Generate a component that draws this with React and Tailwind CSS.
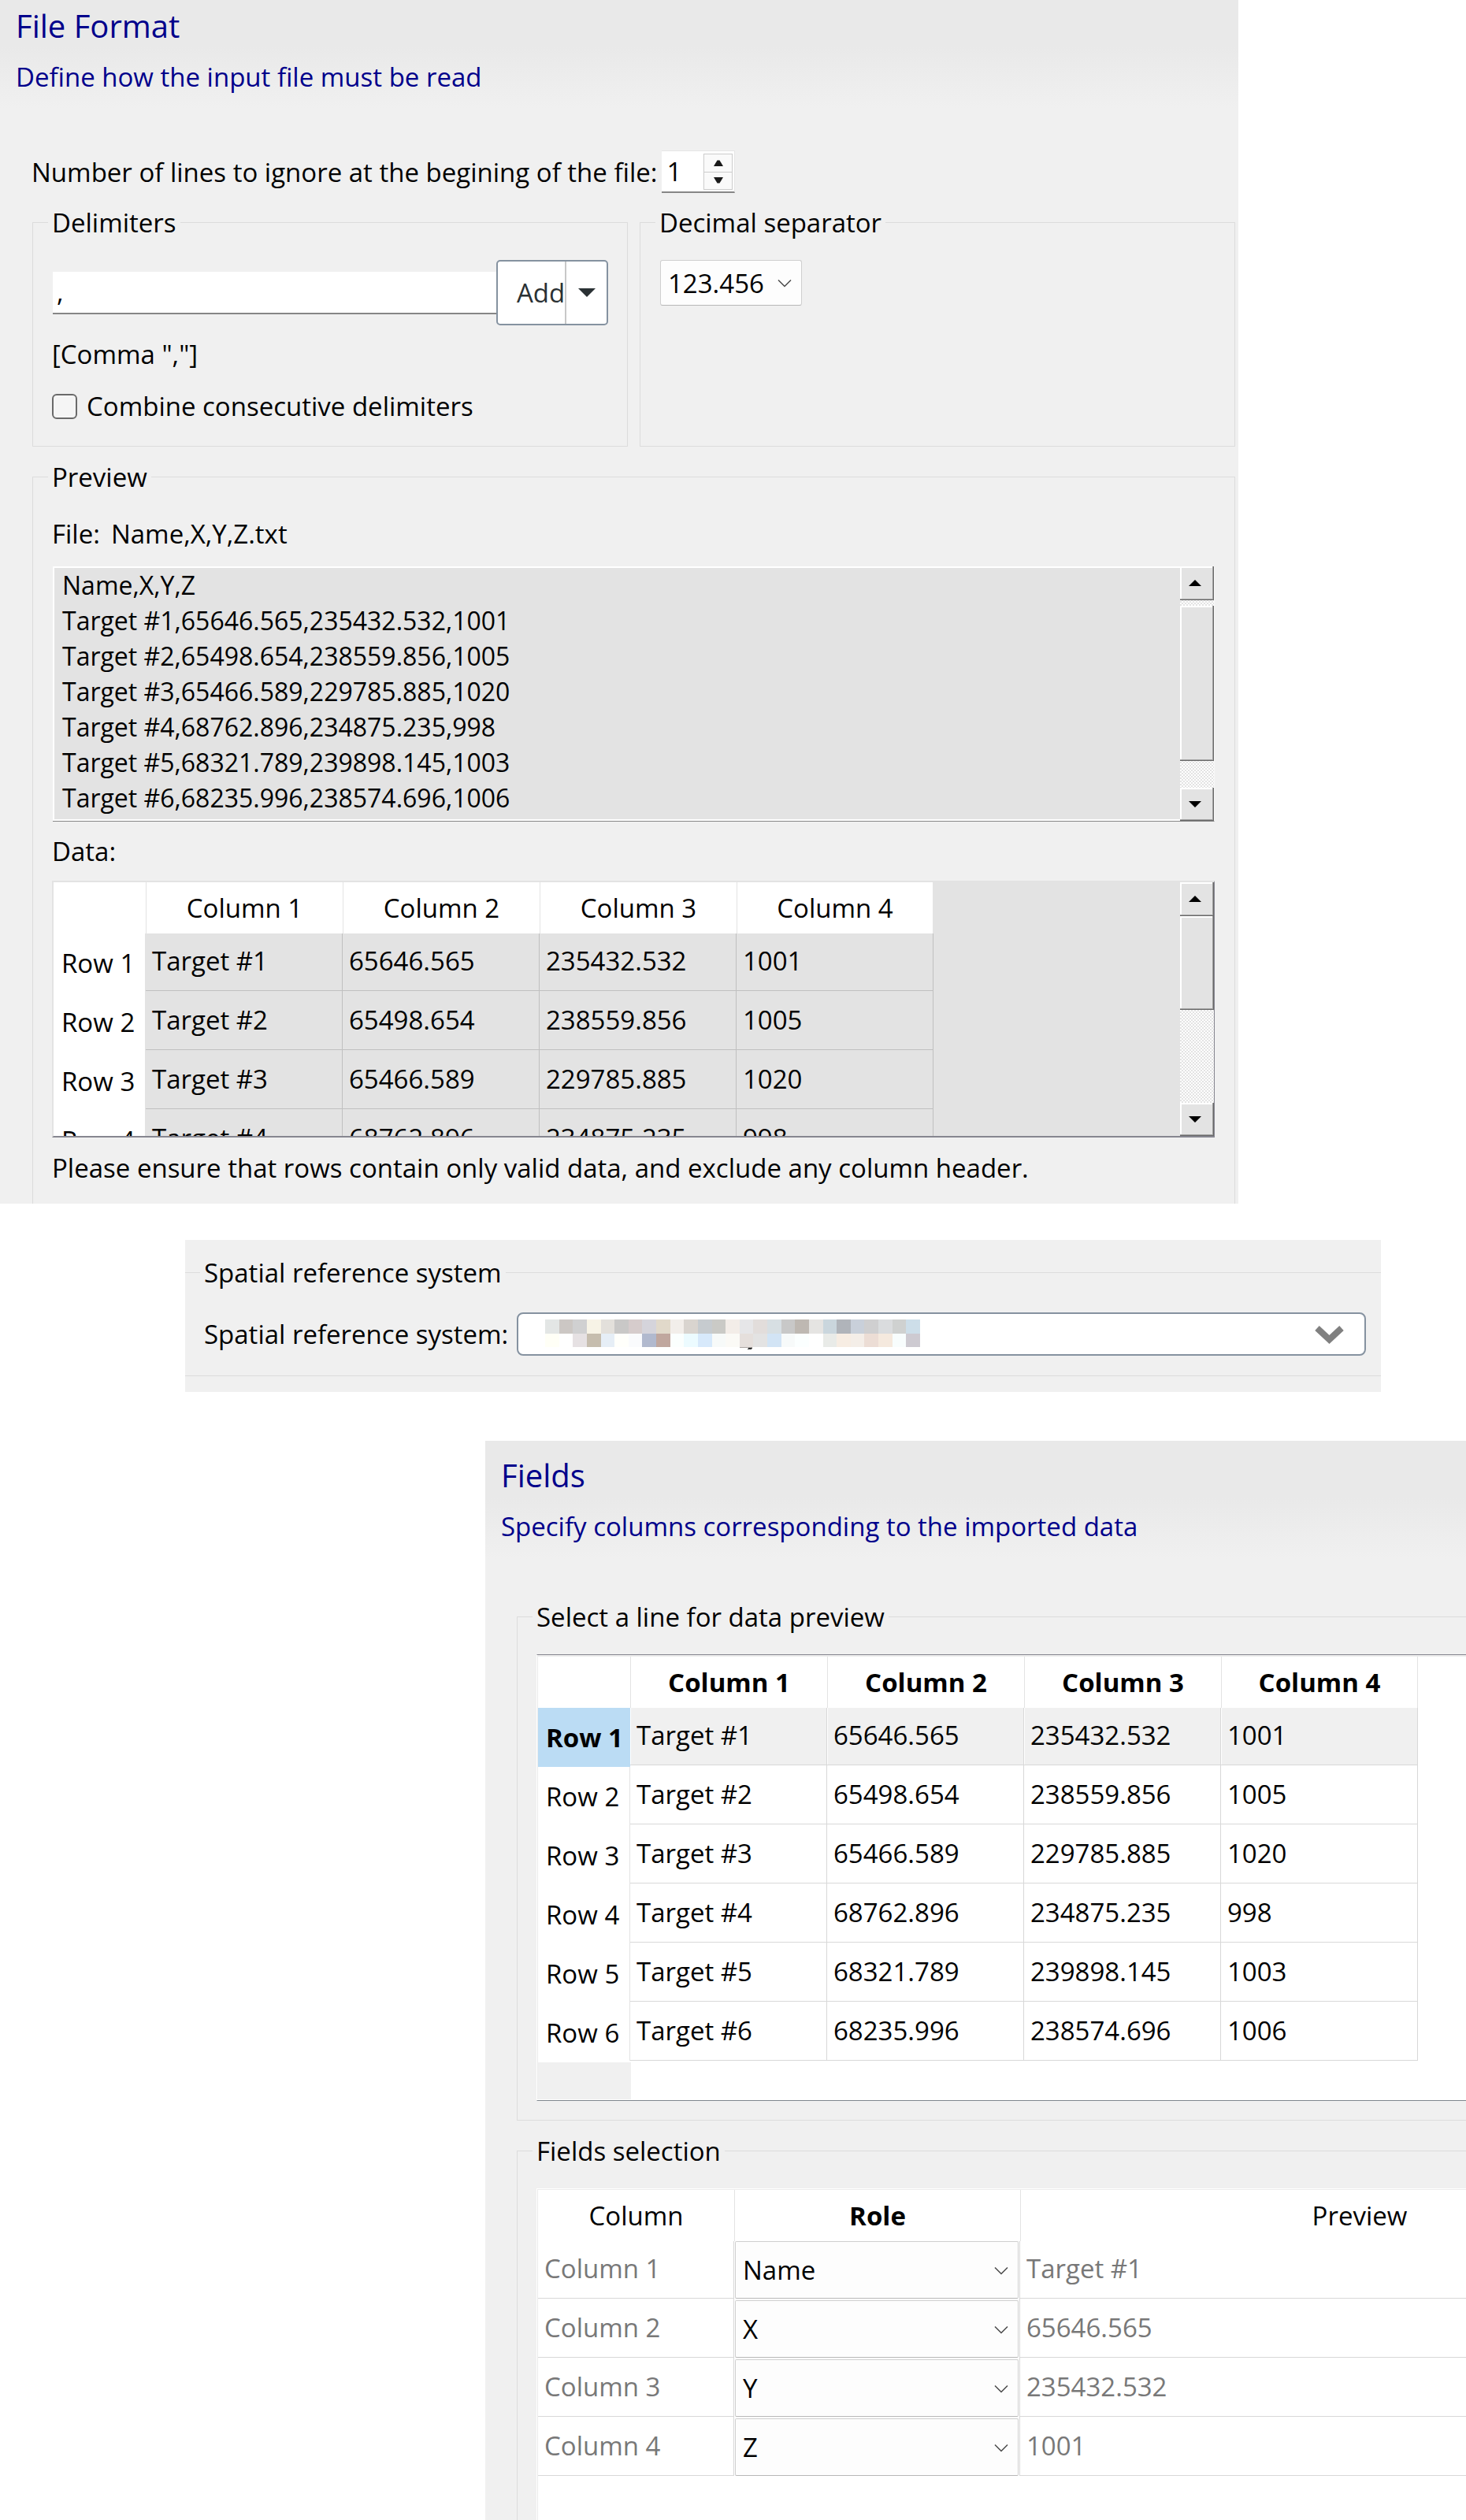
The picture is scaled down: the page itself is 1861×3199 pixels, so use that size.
import { useState } from "react";
import clsx from "clsx";

const TARGETS = [
  ["Target #1", "65646.565", "235432.532", "1001"],
  ["Target #2", "65498.654", "238559.856", "1005"],
  ["Target #3", "65466.589", "229785.885", "1020"],
  ["Target #4", "68762.896", "234875.235", "998"],
  ["Target #5", "68321.789", "239898.145", "1003"],
  ["Target #6", "68235.996", "238574.696", "1006"],
];

const RAW_TEXT = ["Name,X,Y,Z", ...TARGETS.map((t) => t.join(","))].join("\n");

const COLUMNS = ["Column 1", "Column 2", "Column 3", "Column 4"];

const ROLES = ["Name", "X", "Y", "Z"];

const MOSAIC = [
  "#e3e6e5 #ccc7c4 #d0d0d1 #f7f3e6 #e3e0db #c9c8c7 #d6cccc #d5d4db #e1d9ca #f2eeea #d9d4cf #c6cbcf #cacac6 #f3ede8 #e6e6e8 #e2dddb #d7dfe3 #c8c8c8 #beb8b2 #e5e4e2 #cad6dd #b0b4ba #c9d0da #cfcfd0 #dadcde #cfd1d0 #cddee9",
  "#fffff6 #ffffff #e6e1e3 #c6bdae #e6eef6 #fffffb #fafbfd #b1b9ce #c0a79e #fbfffe #ecfbff #d7e9fb #f7faf9 #fbfaf6 #e5dfdc #e3e3e3 #d2e4f5 #f7fafa #fbffff #ffffff #e9ebe8 #f7ede3 #f4eee8 #ecddd5 #f5e9de #f8fdfd #cdcad1",
].map((row) => row.split(" "));

function Header({ title, subtitle, className }) {
  return (
    <header className={clsx("pl-5 text-[#00008b]", className)}>
      <h2 className="text-[40px] leading-[54px]">{title}</h2>
      <p className="mt-[15px]">{subtitle}</p>
    </header>
  );
}

function Group({ title, className, children }) {
  return (
    <fieldset className={clsx("min-w-0 border-[#dcdcdc] pl-[19px]", className)}>
      <legend className="pr-[5px] pl-[5px]">{title}</legend>
      {children}
    </fieldset>
  );
}

function Chevron() {
  return (
    <svg
      className="pointer-events-none absolute top-1/2 right-[13px] -mt-1"
      width="18"
      height="10"
      viewBox="0 0 18 10"
      fill="none"
      stroke="#4a4a4a"
      strokeWidth="1.5"
    >
      <path d="M1 0.5 9 8.5 17 0.5" />
    </svg>
  );
}

function Arrow({ down }) {
  return (
    <svg width="16" height="8" viewBox="0 0 16 8">
      <path d={down ? "M0 0h16L8 8z" : "M0 8h16L8 0z"} fill="#000" />
    </svg>
  );
}

const BEVEL =
  "flex items-center justify-center border-r border-b border-[#696969] bg-[#e3e3e3] pr-1 shadow-[inset_-1px_-1px_0_#a0a0a0,inset_2px_2px_0_#ffffff]";

function ScrollBar({ thumb }) {
  return (
    <div className="flex w-[43px] shrink-0 flex-col bg-[repeating-conic-gradient(#ffffff_0_25%,#e3e3e3_0_50%)] bg-[length:4px_4px]">
      <button aria-label="Scroll up" className={clsx(BEVEL, "h-[43px]")}>
        <Arrow />
      </button>
      <div className={clsx(BEVEL, thumb)} />
      <button aria-label="Scroll down" className={clsx(BEVEL, "mt-auto h-[42px]")}>
        <Arrow down />
      </button>
    </div>
  );
}

function DataTable({ rows, selected, bold, lineColor }) {
  return (
    <table className="w-[1117px] shrink-0 table-fixed border-separate border-spacing-0 text-left">
      <thead>
        <tr className="h-[65px] bg-white">
          <td className="w-[117px]" />
          {COLUMNS.map((c) => (
            <th
              key={c}
              className={clsx(
                "border-l border-[#e3e3e3] p-0 text-center last:border-r",
                bold ? "font-bold" : "font-normal",
              )}
            >
              {c}
            </th>
          ))}
        </tr>
      </thead>
      <tbody>
        {rows.map((row, i) => (
          <tr key={row[0]} className={i === 0 ? "h-[73px]" : "h-[75px]"}>
            <th
              className={clsx(
                "border-r p-0 pl-[10px] align-top whitespace-nowrap",
                i === 0 ? "pt-[15px]" : "pt-[17px]",
                selected === i
                  ? "relative border-[#bbdcf4] bg-[#bbdcf4] font-bold shadow-[0_2px_0_#bbdcf4]"
                  : "border-[#e3e3e3] bg-white font-normal",
              )}
            >
              Row {i + 1}
            </th>
            {row.map((cell) => (
              <td
                key={cell}
                className={clsx(
                  "border-r border-b p-0 pl-2 align-top",
                  lineColor,
                  i === 0 ? "pt-[12px]" : "pt-[14px]",
                  selected === i && "bg-[#f0f0f0] shadow-[inset_1px_0_0_#ffffff]",
                )}
              >
                {cell}
              </td>
            ))}
          </tr>
        ))}
      </tbody>
    </table>
  );
}

function FileFormat() {
  const [lines, setLines] = useState(1);

  return (
    <section className="mr-[289px] bg-[#f0f0f0] bg-[linear-gradient(#e9e9e9_60px,#f0f0f0_138px)] pr-1">
      <Header
        title="File Format"
        subtitle="Define how the input file must be read"
        className="pt-[6px]"
      />

      <div className="mt-[71px] flex h-[54px] items-center pl-10">
        <label htmlFor="lines">
          Number of lines to ignore at the begining of the file:
        </label>
        <div className="ml-[6px] flex h-[54px] w-[93px] border-t border-r border-b-2 border-[#e6e6e6] border-b-[#868686] bg-white">
          <input
            id="lines"
            type="number"
            value={lines}
            onChange={(e) => setLines(Number(e.target.value))}
            className="w-[53px] [appearance:textfield] pl-[6px] outline-none [&::-webkit-inner-spin-button]:appearance-none"
          />
          <div className="mt-[3px] mb-[2px] flex w-[37px] flex-col divide-y divide-[#cccccc] border border-[#cccccc] bg-[#fafafa]">
            <button
              aria-label="Increase"
              onClick={() => setLines(lines + 1)}
              className="flex flex-1 items-center justify-center"
            >
              <svg width="12" height="8" viewBox="0 0 12 8">
                <path d="M0 8 4.500 0.500h3L12 8z" fill="#1a1a1a" />
              </svg>
            </button>
            <button
              aria-label="Decrease"
              onClick={() => setLines(Math.max(0, lines - 1))}
              className="flex flex-1 items-center justify-center"
            >
              <svg width="12" height="8" viewBox="0 0 12 8">
                <path d="M0 0 4.500 7.500h3L12 0z" fill="#1a1a1a" />
              </svg>
            </button>
          </div>
        </div>
      </div>

      <div className="mt-[15px] grid grid-cols-2 gap-[15px] pl-[41px]">
        <Group title="Delimiters" className="border pr-6 pb-7">
          <div className="flex items-center pt-[25px] pl-[6px]">
            <input
              aria-label="Delimiter"
              defaultValue=","
              className="h-[54px] min-w-0 flex-1 border-b-2 border-[#868686] bg-white pl-[5px] outline-none"
            />
            <div className="flex h-[83px] w-[142px] rounded-[5px] border-2 border-[#8592a0] bg-white text-[#2a3134]">
              <button className="w-[87px] border-r-2 border-[#c8c8c8] pl-6">
                Add
              </button>
              <button
                aria-label="More delimiters"
                className="flex flex-1 items-center justify-center"
              >
                <svg width="22" height="11" viewBox="0 0 22 11">
                  <path d="M0 0h22L11 11z" fill="#2a3134" />
                </svg>
              </button>
            </div>
          </div>
          <p className="mt-[14px] pl-[5px]">[Comma ","]</p>
          <div className="mt-[21px] flex items-center pl-[5px]">
            <input
              id="combine"
              type="checkbox"
              className="size-8 appearance-none rounded-[6px] border-2 border-[#6a6a6a] bg-[#f5f5f5] checked:bg-[#8592a0]"
            />
            <label htmlFor="combine" className="pl-3">
              Combine consecutive delimiters
            </label>
          </div>
        </Group>

        <Group title="Decimal separator" className="border">
          <div className="relative mt-[25px] ml-[6px] h-[58px] w-[180px]">
            <select
              aria-label="Decimal separator"
              className="h-full w-full appearance-none rounded-[3px] border border-[#cfcfcf] border-b-[#b8b8b8] bg-[#fdfdfd] pl-[9px]"
            >
              <option>123.456</option>
              <option>123,456</option>
            </select>
            <Chevron />
          </div>
        </Group>
      </div>

      <div className="mt-4 pl-[41px]">
        <Group title="Preview" className="border border-b-0 pr-[25px] pb-[23px]">
          <p className="mt-[27px] flex gap-[14px] pl-[5px]">
            <span>File:</span>
            <span>Name,X,Y,Z.txt</span>
          </p>

          <div className="mt-[19px] ml-[6px] flex h-[324px] border-r border-b border-[#f8f8f8] border-b-[#868686]">
            <textarea
              aria-label="File content"
              readOnly
              value={RAW_TEXT}
              className="block h-full min-w-0 flex-1 resize-none overflow-hidden bg-[#e3e3e3] pt-px pl-3 text-[32px] shadow-[inset_2px_2px_0_#ffffff,inset_0_-2px_0_#ffffff] outline-none"
            />
            <ScrollBar thumb="mt-[7px] h-[197px]" />
          </div>

          <p className="mt-[15px] pl-[5px]">Data:</p>

          <div className="mt-[15px] ml-[5px] flex h-[326px] justify-between overflow-hidden border-t-2 border-r border-b-2 border-l-2 border-[#e3e3e3] border-r-[#868690] border-b-[#868690] bg-[#e3e3e3]">
            <DataTable rows={TARGETS.slice(0, 4)} lineColor="border-[#c0c0c0]" />
            <ScrollBar thumb="h-[119px]" />
          </div>

          <p className="mt-4 pl-[5px]">
            Please ensure that rows contain only valid data, and exclude any
            column header.
          </p>
        </Group>
      </div>
    </section>
  );
}

function SpatialReference() {
  return (
    <section className="mt-[46px] mr-[108px] ml-[235px] bg-[#f0f0f0] pt-[19px] pb-5">
      <Group title="Spatial reference system" className="border-y pr-[19px] pb-[25px]">
        <div className="flex items-center pt-7 pl-[5px]">
          <label htmlFor="srs">Spatial reference system:</label>
          <div className="relative ml-[11px] h-[55px] flex-1">
            <select
              id="srs"
              className="h-full w-full appearance-none rounded-[8px] border-2 border-[#8592a0] bg-white"
            />
            {/* redacted value */}
            <svg
              className="pointer-events-none absolute top-[9px] left-9"
              width="476"
              height="38"
              viewBox="0 0 476 38"
              shapeRendering="crispEdges"
            >
              {MOSAIC.map((row, y) =>
                row.map((fill, x) => (
                  <rect
                    key={`${x}-${y}`}
                    x={(x * 476) / 27}
                    y={y * 18}
                    width={476 / 27}
                    height={y === 0 ? 18 : 17}
                    fill={fill}
                  />
                )),
              )}
              <path d="M247 35h16v1h-16z" fill="#aaa5a2" />
              <path d="M258 36h6l-3 2h-4z" fill="#333" />
            </svg>
            <svg
              className="pointer-events-none absolute top-4 right-7"
              width="37"
              height="25"
              viewBox="0 0 37 25"
              fill="none"
              stroke="#808080"
              strokeWidth="8"
            >
              <path d="M3 4 18.500 18.500 34 4" />
            </svg>
          </div>
        </div>
      </Group>
    </section>
  );
}

function Fields() {
  return (
    <section className="mt-[62px] ml-[616px] overflow-hidden bg-[#f0f0f0] bg-[linear-gradient(#e9e9e9_72px,#f0f0f0_150px)]">
      <Header
        title="Fields"
        subtitle="Specify columns corresponding to the imported data"
        className="pt-[17px]"
      />

      <div className="mt-[70px] pl-10">
        <Group
          title="Select a line for data preview"
          className="border border-r-0 pb-6"
        >
          <div className="mt-[25px] ml-[5px] h-[567px] border-y border-l border-white border-t-[#868690] border-b-[#7f868e] bg-white">
            <div className="border-t-2 border-l border-[#ececec]">
              <DataTable
                rows={TARGETS}
                selected={0}
                bold
                lineColor="border-[#d8d8d8]"
              />
              <div className="mt-[2px] h-[47px] w-[118px] bg-[#f0f0f0]" />
            </div>
          </div>
        </Group>

        <Group title="Fields selection" className="mt-4 border border-r-0 border-b-0">
          <div className="mt-[25px] ml-[5px] overflow-hidden border-t border-l border-white bg-white">
            <div className="border-t border-l border-[#ececec] pb-14">
              <table className="w-[1473px] table-fixed border-separate border-spacing-0 text-left">
                <thead>
                  <tr className="h-[65px] text-center">
                    <th className="w-[249px] p-0 font-normal">Column</th>
                    <th className="w-[363px] border-l border-[#e3e3e3] p-0 font-bold">
                      Role
                    </th>
                    <th className="border-l border-[#e3e3e3] p-0 font-normal">
                      Preview
                    </th>
                  </tr>
                </thead>
                <tbody className="text-[#787878]">
                  {COLUMNS.map((column, i) => (
                    <tr key={column} className={i === 0 ? "h-[73px]" : "h-[75px]"}>
                      <td
                        className={clsx(
                          "border-r border-b border-[#d8d8d8] p-0 pl-2 align-top",
                          i === 0 ? "pt-[12px]" : "pt-[14px]",
                        )}
                      >
                        {column}
                      </td>
                      <td className="border-r border-[#d8d8d8] p-0 px-px align-bottom">
                        <div className="relative h-[73px] text-black">
                          <select
                            aria-label={`${column} role`}
                            defaultValue={ROLES[i]}
                            className="block h-full w-full appearance-none rounded-[2px] border border-[#cfcfcf] border-b-[#b8b8b8] bg-[#fdfdfd] pl-[9px]"
                          >
                            {ROLES.map((role) => (
                              <option key={role}>{role}</option>
                            ))}
                          </select>
                          <Chevron />
                        </div>
                      </td>
                      <td
                        className={clsx(
                          "border-b border-[#d8d8d8] p-0 pl-2 align-top",
                          i === 0 ? "pt-[12px]" : "pt-[14px]",
                        )}
                      >
                        {TARGETS[0][i]}
                      </td>
                    </tr>
                  ))}
                </tbody>
              </table>
            </div>
          </div>
        </Group>
      </div>
    </section>
  );
}

export default function App() {
  return (
    <main className="min-h-screen bg-white font-['Open_Sans','Noto_Sans',sans-serif] text-[33px] leading-[45px] text-black">
      <FileFormat />
      <SpatialReference />
      <Fields />
    </main>
  );
}
